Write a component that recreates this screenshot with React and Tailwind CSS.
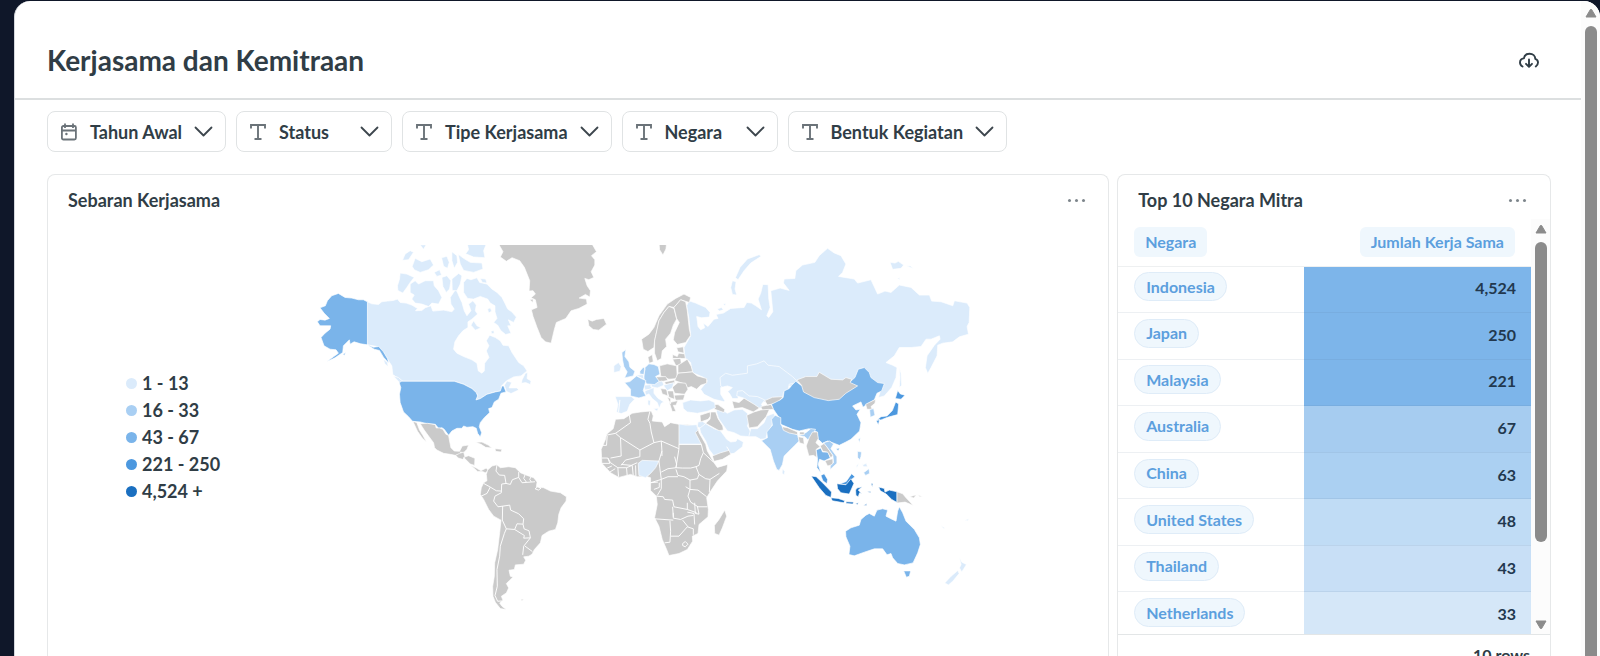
import React from 'react';

const LIGHT = '#dbebfb';
const SOFT = '#a9cff3';
const MEDIUM = '#7ab4ea';
const STRONG = '#4c98df';
const DEEP = '#1a6fc0';
const NONE = '#cacaca';

const legend = [
    { label: '1 - 13', color: 'bg-[#dbebfb]' },
    { label: '16 - 33', color: 'bg-[#a9cff3]' },
    { label: '43 - 67', color: 'bg-[#7ab4ea]' },
    { label: '221 - 250', color: 'bg-[#4c98df]' },
    { label: '4,524 +', color: 'bg-[#1a6fc0]' },
];

const filters = [
    { label: 'Tahun Awal', icon: CalendarIcon },
    { label: 'Status', icon: TextIcon },
    { label: 'Tipe Kerjasama', icon: TextIcon },
    { label: 'Negara', icon: TextIcon },
    { label: 'Bentuk Kegiatan', icon: TextIcon },
];

const rows = [
    { country: 'Indonesia', total: '4,524', color: 'bg-[#7db5ea]' },
    { country: 'Japan', total: '250', color: 'bg-[#7db5ea]' },
    { country: 'Malaysia', total: '221', color: 'bg-[#7db5ea]' },
    { country: 'Australia', total: '67', color: 'bg-[#a6ccf0]' },
    { country: 'China', total: '63', color: 'bg-[#abd0f2]' },
    { country: 'United States', total: '48', color: 'bg-[#c0dcf5]' },
    { country: 'Thailand', total: '43', color: 'bg-[#c8dff6]' },
    { country: 'Netherlands', total: '33', color: 'bg-[#d5e7f8]' },
];

// Every region keeps its own local grid, three units per map pixel
const regions = [
    {
        name: 'Russia and Central Asia',
        x: 364,
        y: -6,
        shapes: [
            // Russia
            [LIGHT, 'M25 185L45 192 75 205 88 220 86 234 62 236 48 232 50 245 52 262 60 272 72 266 68 252 82 262 100 240 112 238 106 226 128 222 150 208 190 205 198 190 212 192 225 200 242 212 232 180 240 162 246 136 262 137 264 180 268 205 258 230 264 235 276 218 270 155 298 147 325 154 308 132 310 120 342 118 345 95 365 78 402 70 415 50 440 28 460 42 480 50 495 75 485 100 473 112 520 120 530 132 570 122 590 165 612 156 630 160 655 138 690 145 715 168 745 168 752 186 780 188 815 200 820 185 858 192 866 205 864 250 858 262 862 285 835 293 815 308 785 312 770 318 768 350 750 385 740 403 733 385 738 350 760 318 777 300 775 290 750 300 735 300 720 322 690 325 655 325 640 350 615 370 635 378 648 385 645 415 632 445 610 470 592 475 605 435 560 430 500 440 430 440 350 430 340 440 200 440 130 450 140 490 100 480 70 465 60 450 80 425 70 415 35 400 30 370 12 355 10 325 30 290 25 240 18 200Z'],
            [LIGHT, 'M655 385L660 402 662 438 655 445 657 415Z'],
            [LIGHT, 'M235 47L241 52 210 72 190 95 172 122 164 116 178 85 200 60Z'],
            [LIGHT, 'M155 125L166 128 163 150 168 168 155 166 150 145Z'],
            [LIGHT, 'M627 70L642 72 652 67 668 78 660 88 635 91Z M676 80L688 81 697 89Z M648 118L655 116 657 121Z'],
            [LIGHT, 'M110 210L122 205 128 212 116 216Z M127 195L135 193 133 200Z'],
            // Kazakhstan
            [LIGHT, 'M118 415L135 402 155 408 200 402 200 380 228 374 250 365 262 378 295 382 335 412 348 425 340 432 325 435 322 455 308 460 305 478 270 478 252 488 230 490 205 475 190 458 172 460 172 478 155 478 146 462 132 450 120 440Z'],
            ['#fff', 'M120 445L140 440 155 445 140 458 152 476 155 495 158 512 140 512 128 498 132 484 120 465Z'],
        ],
    },
    {
        name: 'North America',
        x: -16,
        y: -16,
        shapes: [
            // Canada
            [LIGHT, 'M202 218L215 224 235 226 245 218 262 216 280 214 292 210 300 220 318 222 335 228 352 238 346 245 365 244 375 236 392 230 398 246 430 243 455 248 462 240 452 225 450 205 460 190 467 180 478 205 485 220 492 245 500 260 512 245 505 225 518 215 528 228 525 245 532 255 515 270 503 278 503 295 488 305 475 320 464 338 460 360 470 372 490 382 515 392 530 402 534 425 545 432 552 425 553 402 566 385 558 365 566 350 558 335 568 318 585 325 600 335 608 348 625 350 635 370 645 385 655 400 670 410 680 425 662 440 640 443 618 455 602 472 610 470 606 486 585 488 560 495 540 508 527 512 532 500 528 490 515 478 490 465 462 456 305 456 295 448 278 436 275 410 262 390 250 370 232 352 202 347Z'],
            [LIGHT, 'M612 468L620 455 634 460 626 476 650 476 655 482 632 493 618 486Z'],
            [LIGHT, 'M665 452L675 432 682 430 680 448 692 455 690 466 676 460 663 462Z'],
            [LIGHT, 'M280 440L295 445 310 458 300 462Z M250 390L262 400 264 412 254 404Z'],
            [LIGHT, 'M490 160L500 148 512 152 530 146 538 160 560 165 575 180 590 190 605 205 615 225 622 240 634 248 648 264 640 280 624 272 632 290 622 290 632 312 616 316 602 305 592 288 580 280 590 268 584 248 584 230 570 222 562 210 540 202 520 210 502 208 490 190Z'],
            [LIGHT, 'M512 288L520 275 530 290 542 296 525 303Z M562 240L570 236 574 246 565 252Z M540 148L556 150 560 162 546 160Z M572 306L580 304 582 312 574 314Z'],
            [LIGHT, 'M330 165L345 155 355 165 375 155 400 155 402 170 415 185 425 205 415 225 395 222 385 232 365 225 345 222 335 210 342 198 330 190Z'],
            [LIGHT, 'M300 132L320 135 342 145 330 160 320 175 308 192 293 184 292 170 298 150Z'],
            [LIGHT, 'M336 112L345 88 365 98 390 90 400 108 385 122 360 130 342 122Z'],
            [LIGHT, 'M307 94L315 75 330 65 340 70 325 92Z M360 48L378 47 370 61Z M402 130L418 122 424 138 410 142Z'],
            [LIGHT, 'M425 145L440 140 452 155 448 180 438 190 428 172Z M455 150L475 133 485 140 480 165 470 185 456 184Z'],
            [LIGHT, 'M424 86L440 82 447 100 442 118 430 112Z M455 68L470 80 472 100 462 118 455 95Z'],
            [LIGHT, 'M474 76L490 88 510 100 545 102 548 120 520 130 490 124 480 105Z M500 40L560 40 550 65 554 86 520 84 496 74 505 62Z'],
            // United States
            [MEDIUM, 'M305 456L462 456 490 465 515 478 528 490 532 500 527 512 540 508 560 495 585 488 600 485 605 470 610 470 617 488 602 492 595 510 582 518 575 535 565 538 568 550 552 565 540 580 537 592 544 610 540 623 532 612 528 597 518 592 500 594 490 590 485 597 470 597 455 605 445 618 432 600 425 595 415 597 405 585 380 583 360 578 337 576 325 562 310 548 300 520 298 495 302 475 297 460Z'],
            [MEDIUM, 'M202 218L202 347 182 344 162 338 150 345 148 332 130 350 128 370 105 386 80 398 100 383 115 372 108 362 90 360 72 350 63 325 75 312 90 300 92 290 60 290 52 278 60 271 75 273 88 268 72 252 60 236 76 230 82 215 95 200 115 193 135 205 155 207 175 212 190 212Z'],
            [MEDIUM, 'M202 347L220 354 236 352 250 368 262 388 266 402 250 384 238 364 222 360Z M128 376L136 370 134 378Z'],
        ],
    },
    {
        name: 'North Atlantic',
        x: 164,
        y: -16,
        shapes: [
            [NONE, 'M52 40L332 40 348 68 333 80 343 92 343 108 332 128 340 145 325 152 313 148 320 170 330 185 328 204 315 196 296 207 318 210 320 225 295 238 272 245 256 268 228 280 222 300 212 342 195 338 182 325 170 295 158 262 153 242 170 235 165 212 152 206 165 195 158 185 146 186 148 155 132 115 118 95 95 86 78 97 60 84 68 68Z'],
            [NONE, 'M322 270L335 276 348 271 370 268 378 285 355 303 338 301 325 290Z'],
            [NONE, 'M535 40L558 40 556 60 547 78 537 62Z M148 212L158 210 158 220Z'],
        ],
    },
    {
        name: 'Latin America',
        x: 84,
        y: 154,
        shapes: [
            // Mexico and the isthmus
            [NONE, 'M60 73L82 72 105 76 108 86 118 86 128 90 137 105 145 108 148 125 152 145 162 155 178 156 186 140 205 137 200 150 190 160 180 158 185 164 165 168 150 165 130 162 110 152 103 145 100 130 85 110 72 92Z'],
            [NONE, 'M38 66L50 70 58 92 68 108 79 128 66 116 52 96Z'],
            [NONE, 'M166 168L178 162 190 158 194 172 187 180 174 176Z M190 174L205 169 224 177 223 198 210 194Z M212 198L228 206 242 214 258 206 264 214 255 220 246 216 232 216Z'],
            [NONE, 'M226 129L245 128 265 138 274 146 256 144 242 135Z M284 148L305 150 302 158 286 156Z'],
            // South America
            [NONE, 'M262 212L275 200 290 196 300 205 325 202 345 205 360 220 380 228 400 235 410 248 408 262 430 265 450 275 480 280 498 292 497 305 482 325 475 345 472 370 465 390 445 395 425 408 420 430 402 450 395 464 385 470 370 472 376 482 370 494 345 496 342 510 326 512 330 530 338 532 318 552 325 565 318 580 303 590 308 602 298 610 305 620 318 630 300 627 285 608 278 590 277 560 282 530 283 490 292 450 298 400 302 362 280 350 265 330 250 300 240 285 243 265 250 250 260 244 258 225Z'],
            [NONE, 'M362 598L370 600 364 604Z'],
        ],
        borders: 'M290 196L287 215 297 227 313 228 317 252 304 254 303 280 M317 252L330 255 336 241 355 234 355 218 M355 234L365 250 404 247 M374 226L370 237 378 248 M392 232L388 240 393 248 M250 252L270 263 288 274 303 275 M270 263L260 282 243 290 M303 280L284 290 280 305 293 322 308 320 328 317 331 332 355 343 370 358 368 374 350 373 343 390 318 388 306 362 307 320 M368 374L371 388 386 394 390 415 370 416 372 408 343 390 M390 415L370 440 367 466 M374 440L396 456 M318 388L312 402 300 440 298 470 290 510 291 560 284 588 292 605 306 604 M404 268L412 262 422 266 414 272Z',
    },
    {
        name: 'Africa and Middle East',
        x: 274,
        y: 144,
        shapes: [
            [NONE, 'M75 90L100 88 125 72 150 68 182 65 188 80 185 95 215 98 222 112 240 100 265 105 320 108 325 130 345 165 350 185 370 220 380 234 411 225 408 245 380 275 358 308 348 325 353 360 352 382 325 405 322 432 305 440 306 455 290 480 265 492 235 498 228 480 215 450 205 410 192 385 200 345 197 320 180 303 180 265 170 262 140 262 120 255 85 264 60 250 34 222 32 180 45 150 48 135 68 118Z'],
            [NONE, 'M402 362L408 380 395 415 385 437 372 432 371 408 385 390Z'],
            [LIGHT, 'M265 104L290 108 318 106 322 122 314 130 332 165 265 165Z'],
            [LIGHT, 'M143 222L155 213 205 215 195 235 180 252 165 265 145 258Z'],
            // Arabian peninsula
            [LIGHT, 'M325 108L345 103 370 118 390 125 408 150 420 158 436 156 440 148 458 158 455 172 430 192 370 200 355 180 345 155 330 130Z'],
            [NONE, 'M365 200L390 190 415 183 420 195 395 210 370 216Z'],
            [LIGHT, 'M320 112L322 98 335 96 345 103 328 116Z'],
            [NONE, 'M328 78L358 68 360 80 352 90 330 98Z'],
            [NONE, 'M360 68L375 68 382 88 396 110 398 122 385 124 345 102 358 90Z'],
            [LIGHT, 'M375 52L395 62 410 72 430 62 455 60 470 72 475 95 470 110 480 128 476 142 450 140 430 130 410 125 398 108 384 88 378 70Z'],
            [LIGHT, 'M474 142L480 118 500 118 520 100 528 80 550 72 552 90 540 115 530 130 525 148 510 150 495 142Z'],
            [NONE, 'M360 45L382 46 402 60 400 70 372 60Z'],
        ],
        borders: 'M45 138L75 132 M75 132L120 100 116 76 M75 132L90 145 148 182 M90 145L92 200 60 206 M32 168L48 168 50 140 M148 182L190 160 182 128 178 102 172 90 178 66 M148 182L148 202 105 212 92 228 M190 160L212 155 265 178 265 165 M212 155L214 185 205 215 M265 178L256 235 232 238 212 248 M214 185L214 200 M265 165L332 165 338 190 330 208 325 228 316 232 M252 202L258 225 256 235 275 236 300 236 316 232 M338 190L368 218 M316 232L325 255 345 268 358 270 386 252 M358 270L356 308 M325 255L320 268 298 272 280 262 262 258 256 240 M298 272L298 300 322 302 348 322 M298 300L292 320 300 338 322 352 350 352 M205 215L208 238 212 270 180 280 M212 270L232 262 262 262 M212 270L212 298 200 318 M197 320L218 322 222 330 246 332 250 352 290 360 290 340 M246 352L248 382 M192 388L248 392 M248 370L248 386 270 390 292 380 308 378 M238 394L240 425 238 458 222 460 M240 440L265 440 290 412 308 418 308 436 M276 392L292 412 M290 360L318 370 M312 340L314 372 325 374 320 350 M290 368L310 372 312 405 M34 206L52 206 58 222 34 222 M52 206L60 220 82 235 M82 235L84 262 M50 236L64 230 M58 248L74 238 M82 235L108 235 110 260 M108 235L125 228 128 258 M92 225L122 228 140 220 M135 228L136 260 M180 280L202 278 M190 300L206 294 206 280 M298 300L285 292 M276 462L284 456 292 464 284 472 276 468Z M415 183L408 172',
    },
    {
        name: 'Europe',
        x: 274,
        y: 34,
        shapes: [
            [NONE, 'M153 180L175 165 190 145 205 110 230 75 255 58 280 45 300 55 296 70 270 62 250 85 235 82 220 100 205 125 200 150 192 185 190 205 172 217 158 210Z'],
            [NONE, 'M235 82L250 88 258 120 248 138 240 162 225 180 228 202 215 215 212 238 200 245 192 222 192 185 205 125 220 100Z'],
            [NONE, 'M250 85L270 62 285 68 290 95 296 150 300 168 285 190 260 196 248 182 252 160 266 130 258 118Z'],
            [NONE, 'M258 206L278 203 280 222 262 218Z M246 226L260 232 264 222 282 224 284 238 246 238Z M246 240L270 237 272 255 256 260Z'],
            [NONE, 'M262 258L275 250 290 240 302 262 306 278 262 282Z M207 260L230 254 258 260 260 298 235 300 210 290Z'],
            [NONE, 'M252 304L262 282 305 278 320 290 348 298 348 312 330 318 318 330 302 322 290 326 285 315Z'],
            [NONE, 'M245 324L262 310 285 312 292 330 282 345 252 342Z M250 348L283 346 278 362 255 363Z'],
            [NONE, 'M230 335L248 335 252 360 235 354Z M210 328L228 330 232 350 215 344Z M236 370L262 364 256 378 248 378 256 396 245 397Z M230 354L240 358 240 374Z'],
            [NONE, 'M196 293L225 292 232 303 205 309Z M222 308L252 302 252 312 225 316Z M172 234L185 226 188 248 176 252Z'],
            [LIGHT, 'M218 318L250 310 245 326 230 334Z M182 312L215 305 220 318 200 326 180 322Z M160 318L182 316 184 330 163 332Z'],
            [LIGHT, 'M163 335L190 325 190 342 202 357 220 368 212 372 206 387 200 370 185 358 175 344 165 348Z M188 388L203 387 200 396Z M172 362L180 364 178 380 172 376Z'],
            [SOFT, 'M162 266L175 254 190 256 203 262 208 285 195 292 206 306 192 316 168 314 160 298Z M148 276L158 264 164 268 160 286 148 284Z'],
            [LIGHT, 'M136 288L158 286 160 300Z'],
            [SOFT, 'M102 310L118 307 138 290 152 298 166 304 162 320 158 334 166 350 145 356 120 350 120 330Z'],
            [SOFT, 'M94 220L106 211 103 232 115 248 118 264 133 276 128 290 102 296 110 278 100 262 96 242Z'],
            [LIGHT, 'M70 260L84 250 92 262 88 276 70 280Z M74 352L122 352 132 360 118 375 110 396 92 403 78 398 82 375Z'],
            [LIGHT, 'M276 370L300 362 330 365 355 362 372 370 374 386 350 396 320 402 290 398 278 388Z'],
            [LIGHT, 'M438 350L440 336 455 334 475 350 500 352 522 362 512 375 518 386 500 386 480 370 458 356Z'],
            [NONE, 'M424 365L445 370 460 357 490 375 506 386 488 398 455 385 430 388Z'],
            [NONE, 'M522 364L545 354 577 352 560 370 530 378Z M510 382L540 375 550 390 515 393Z'],
            [NONE, 'M468 408L490 398 510 392 536 390 526 412 500 442 475 446Z'],
        ],
        borders: 'M88 362L84 398',
    },
    {
        name: 'Asia Pacific',
        x: 414,
        y: 104,
        shapes: [
            // China and Mongolia
            [MEDIUM, 'M122 165L148 152 157 145 160 125 175 118 183 108 195 96 210 108 250 120 340 115 355 100 372 85 382 60 400 55 415 70 420 85 440 100 460 103 452 125 438 132 430 152 408 165 396 174 390 158 365 170 375 182 388 180 378 195 390 220 386 245 360 270 345 278 325 288 305 280 290 275 275 282 262 270 258 248 235 238 205 245 185 240 150 225 145 205 128 180Z'],
            [NONE, 'M198 92L225 82 258 82 265 69 280 78 300 90 335 92 345 85 362 90 358 100 380 110 345 132 325 150 292 154 250 145 218 128 212 108Z'],
            [MEDIUM, 'M316 298L326 296 322 305Z'],
            [SOFT, 'M122 210L133 198 150 205 150 225 160 240 200 256 205 275 190 290 175 305 160 320 155 345 145 363 138 360 128 335 118 300 105 287 92 274 110 265 108 248 125 228Z'],
            [SOFT, 'M203 258L225 250 240 238 254 240 248 252 232 272 222 262Z'],
            [NONE, 'M154 232L170 235 200 248 200 256 175 251 158 243Z M202 262L218 265 220 285 206 280Z M206 248L220 248 220 256 206 255Z'],
            [NONE, 'M226 290L235 265 245 248 260 248 262 268 255 280 268 292 256 300 258 325 248 318 234 320Z'],
            [MEDIUM, 'M256 302L270 296 275 308 292 308 298 326 280 335 266 330 262 345 270 370 258 355 260 330Z'],
            [NONE, 'M268 290L280 282 292 298 306 318 300 326 290 308 276 306Z M282 334L306 328 306 345 290 350Z'],
            [SOFT, 'M278 280L296 275 308 284 300 298 318 322 318 342 298 360 298 350 308 340 306 318 290 295Z'],
            [LIGHT, 'M155 358L162 366 160 376 154 372Z'],
            [NONE, 'M404 165L434 150 432 162 420 172 424 180 408 180Z'],
            [SOFT, 'M416 181L428 178 432 198 418 204Z M382 270L388 265 386 280Z M380 306L392 308 390 322 386 332 380 324Z M398 370L414 358 416 372 404 378Z'],
            [LIGHT, 'M390 338L396 346 406 342 410 352 398 352Z M376 350L384 342 378 356Z'],
            // Japan
            [STRONG, 'M493 148L500 124 508 134 522 138 510 150Z M438 212L450 202 468 200 484 184 494 158 503 164 500 196 470 204 450 212Z M436 214L446 210 442 227Z'],
            // Malaysia
            [STRONG, 'M270 378L280 373 290 390 288 403 276 394Z M326 404L346 396 362 373 372 382 362 390 348 406Z'],
            // Indonesia
            [DEEP, 'M241 380L256 382 275 400 302 428 300 444 285 438 265 415Z M318 403L345 406 360 388 369 402 362 418 355 434 330 430 320 418Z M300 445L322 447 342 454 338 460 304 454Z M374 422L378 416 394 412 382 422 392 432 386 430 382 442 375 438Z M443 413L460 417 462 428 475 422 498 427 498 459 482 450 466 434 448 424Z'],
            [DEEP, 'M345 457L368 458 366 464 346 462Z M374 462L382 460 380 466Z M398 468L408 462 406 468Z M420 402L426 402 424 412Z M408 426L420 426 418 430Z'],
            [NONE, 'M498 427L515 433 525 445 547 468 522 458 498 461Z M536 442L556 436 548 446Z M560 436L574 442 566 442Z'],
            [MEDIUM, 'M344 545L360 535 385 527 390 510 405 497 415 492 430 500 438 482 455 478 470 482 465 500 480 508 495 515 500 485 505 472 515 490 525 515 550 540 565 565 568 585 560 610 546 640 520 646 500 642 485 625 480 612 468 616 455 598 430 598 400 608 370 619 354 615 357 590 345 562Z M518 664L539 664 535 680 526 683Z'],
            [LIGHT, 'M684 622L692 638 706 645 692 667 685 655 690 645Z M641 700L660 680 680 663 684 672 665 695 652 706Z'],
            [LIGHT, 'M700 512L714 508 710 514Z M630 528L642 536 636 536Z'],
        ],
    },
];

function CalendarIcon() {
    return (
        <svg className="size-[18px] shrink-0 text-[#6b7379]" viewBox="0 0 18 18" fill="none" stroke="currentColor" strokeWidth="1.8" aria-hidden="true">
            <rect x="1.900" y="3" width="14" height="13.500" rx="1.500" />
            <path d="M2 7.500h14M5 .5V5M13 .5V5" />
            <circle cx="6.400" cy="11" r="1.200" fill="currentColor" stroke="none" />
        </svg>
    );
}

function TextIcon() {
    return (
        <svg className="size-[18px] shrink-0 text-[#6b7379]" viewBox="0 0 18 18" fill="none" stroke="currentColor" strokeWidth="1.9" aria-hidden="true">
            <path d="M2 5.500V2h14v3.500M9 2v14M5.500 16h7" />
        </svg>
    );
}

function ChevronIcon() {
    return (
        <svg className="h-[18px] w-[19px] shrink-0" viewBox="0 0 19 18" fill="none" stroke="#3d464d" strokeWidth="1.8" strokeLinecap="round" strokeLinejoin="round" aria-hidden="true">
            <path d="M1.500 4.500l8 8 8-8" />
        </svg>
    );
}

function CloudIcon() {
    return (
        <svg className="h-[18px] w-5" viewBox="0 0 20 18" fill="none" stroke="#303d46" strokeWidth="1.9" strokeLinecap="round" strokeLinejoin="round" aria-hidden="true">
            <path d="M3.500 15.500C2 14.700 1 13.400 1 11.500 1 9.300 2.700 7.600 4.900 7.400 5.300 4.600 7.600 2.800 10.600 2.800c3.300 0 5.600 2.100 5.700 5.100 1.700.6 2.700 1.900 2.700 3.700 0 1.700-.8 3-2.200 3.900" />
            <path d="M10 8.500v7M7 12.800l3 3 3-3" />
        </svg>
    );
}

function MoreButton({ label }) {
    return (
        <button type="button" aria-label={label} className="flex gap-1 p-1">
            <span className="size-[3px] rounded-full bg-[#7d858b]"></span>
            <span className="size-[3px] rounded-full bg-[#7d858b]"></span>
            <span className="size-[3px] rounded-full bg-[#7d858b]"></span>
        </button>
    );
}

function Arrow({ down }) {
    return (
        <svg className="h-[10px] w-3 shrink-0" viewBox="0 0 12 10" aria-hidden="true">
            <path d={down ? 'M1 1h10L6.600 8.500H5.400z' : 'M1 9h10L6.600 1.500H5.400z'} fill="#8b8b8b" stroke="#8b8b8b" strokeLinejoin="round" />
        </svg>
    );
}

function WorldMap() {
    return (
        <svg viewBox="0 0 658 372" className="w-full" role="img" aria-label="Sebaran Kerjasama">
            {regions.map((region) => (
                <g
                    key={region.name}
                    transform={`translate(${region.x} ${region.y}) scale(.33333)`}
                    stroke="#fff"
                    strokeWidth="2"
                    strokeLinejoin="round"
                >
                    {region.shapes.map(([color, d]) => (
                        <path key={d} d={d} fill={color} />
                    ))}
                    {region.borders && <path d={region.borders} fill="none" strokeWidth="2.8" />}
                </g>
            ))}
        </svg>
    );
}

function MapCard() {
    return (
        <section className="flex flex-col rounded-t-lg border border-b-0 border-[#e6e8e9]">
            <header className="flex h-[50px] items-center justify-between pr-[19px] pl-5">
                <h2 className="text-lg font-bold">Sebaran Kerjasama</h2>
                <MoreButton label="Menu Sebaran Kerjasama" />
            </header>
            <div className="flex pt-5">
                <ul className="w-[268px] shrink-0 pt-[125px] pl-[78px] text-lg leading-[27px] font-bold">
                    {legend.map((item) => (
                        <li key={item.label} className="flex items-center gap-[5px]">
                            <span className={`size-[11px] rounded-full ${item.color}`}></span>
                            {item.label}
                        </li>
                    ))}
                </ul>
                <div className="min-w-0 flex-1 pr-[133px]">
                    <WorldMap />
                </div>
            </div>
        </section>
    );
}

function TableCard() {
    return (
        <section className="flex flex-col overflow-hidden rounded-t-lg border border-b-0 border-[#e6e8e9]">
            <header className="flex h-11 items-center justify-between pt-[6px] pr-5 pl-5">
                <h2 className="text-lg font-bold">Top 10 Negara Mitra</h2>
                <MoreButton label="Menu Top 10 Negara Mitra" />
            </header>
            <div className="flex h-[416px] border-b border-[#e3e6e7]">
                <div className="flex-1 overflow-hidden">
                    <table className="h-[420px] w-full border-collapse font-bold">
                        <thead>
                            <tr className="h-[47px] border-b border-[#eef0f1] text-base text-[#5c9fde]">
                                <th className="w-[45%] pl-4 text-left">
                                    <button type="button" className="h-[30px] rounded-md bg-[#eff7fd] px-[11px]">Negara</button>
                                </th>
                                <th className="pr-4 text-right">
                                    <button type="button" className="h-[30px] rounded-md bg-[#eff7fd] px-[11px]">Jumlah Kerja Sama</button>
                                </th>
                            </tr>
                        </thead>
                        <tbody>
                            {rows.map((row) => (
                                <tr key={row.country} className="border-b border-[#506e8c]/10">
                                    <td className="pb-[5px] pl-4">
                                        <a href="#" className="inline-flex h-[29px] items-center rounded-full border border-[#dfecf8] bg-[#eff7fd] px-[11px] text-base text-[#5c9fde]">
                                            {row.country}
                                        </a>
                                    </td>
                                    <td className={`pr-[15px] pb-[2px] text-right text-base text-[#22384e] ${row.color}`}>{row.total}</td>
                                </tr>
                            ))}
                        </tbody>
                    </table>
                </div>
                <div className="flex w-[19px] flex-col items-center bg-[#fcfcfc] pt-[5px] pb-1">
                    <Arrow />
                    <div className="mt-2 h-[300px] w-3 rounded-full bg-[#8b8b8b]"></div>
                    <div className="flex-1"></div>
                    <Arrow down />
                </div>
            </div>
            <p className="pt-2 pr-5 text-right text-base leading-6 font-bold">10 rows</p>
        </section>
    );
}

function App() {
    return (
        <div className="h-screen overflow-hidden bg-[#0f1729] pt-px pl-[14px] font-[Lato,sans-serif] text-[#303d46]">
            <div className="flex h-full overflow-hidden rounded-t-2xl border-l border-[#d5d8dd] bg-white">
                <main className="min-w-0 flex-1">
                    <header className="flex h-[99px] items-center justify-between border-b-2 border-[#dcdfe0] pt-5 pr-[42px] pl-8">
                        <h1 className="text-[28px] font-bold">Kerjasama dan Kemitraan</h1>
                        <button type="button" aria-label="Unduh">
                            <CloudIcon />
                        </button>
                    </header>

                    <div className="flex flex-wrap gap-[10px] px-8 pt-[11px]">
                        {filters.map(({ label, icon: Icon }) => (
                            <button key={label} type="button" className="flex h-[41px] min-w-[156px] items-center rounded-lg border border-[#e0e3e4] px-3 text-lg font-bold">
                                <Icon />
                                <span className="mr-3 ml-3">{label}</span>
                                <span className="ml-auto">
                                    <ChevronIcon />
                                </span>
                            </button>
                        ))}
                    </div>

                    <div className="grid grid-cols-[71fr_29fr] gap-2 pt-[22px] pr-[30px] pl-8">
                        <MapCard />
                        <TableCard />
                    </div>
                </main>

                <div className="flex w-[19px] flex-col items-center bg-[#fcfcfc] pt-[7px]">
                    <Arrow />
                    <div className="mt-2 w-3 flex-1 rounded-t-full bg-[#8b8b8b]"></div>
                </div>
            </div>
        </div>
    );
}

export default App;
